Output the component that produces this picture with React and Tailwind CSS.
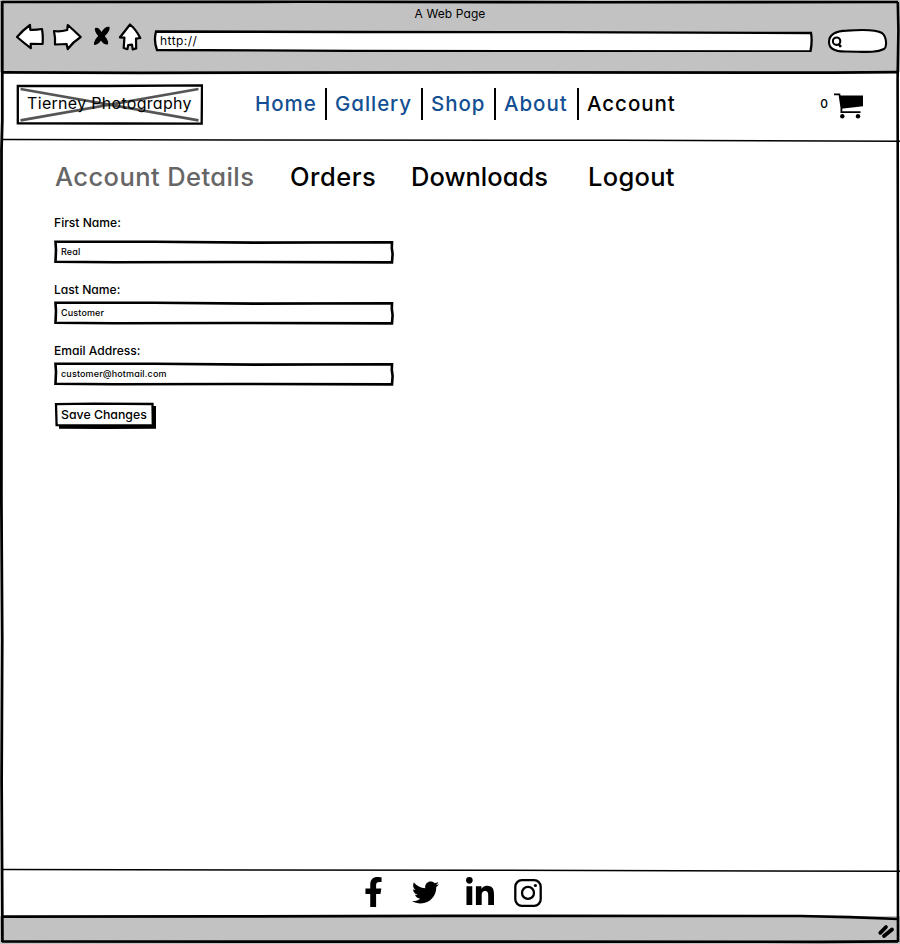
import React from 'react';
import { FaFacebookF, FaTwitter, FaLinkedinIn } from 'react-icons/fa';

function Frame() {
  return (
    <svg className="pointer-events-none absolute inset-0 z-10" width="900" height="944" fill="none" stroke="#000">
      <path d="M2 2 L300 1.8 L600 2.2 L898 2" strokeWidth="2.6" />
      <path d="M2.2 1 L2.3 120 L1.5 150 L1.4 500 L2.2 640 L1.6 780 L2.4 942" strokeWidth="2.8" />
      <path d="M897.8 2 L898.4 30 L897.6 80 L898.3 500 L897.8 700 L898 942" strokeWidth="2.6" />
      <path d="M2 72.3 L140 72.8 L520 72.3 L833 72.6 L898 72.2" strokeWidth="2.8" />
      <path d="M3 139.4 L240 140 L620 140.3 L900 141.2" strokeWidth="1.5" />
      <path d="M3 869.6 L480 870.2 L900 871.3" strokeWidth="1.5" />
      <path d="M2 916.6 L230 916.4 L450 915.8 L800 916 L850 917.2 L898 919" strokeWidth="2.7" />
      <path d="M2 941.5 L430 941.6 L820 941.8 L898 941.4" strokeWidth="2.7" />
    </svg>
  );
}

function BrowserIcons() {
  return (
    <svg width="126" height="28" viewBox="16 23 126 28" fill="#fff" stroke="#000" strokeWidth="2.2" strokeLinejoin="round" className="ml-4 mt-[23px] shrink-0">
      <path d="M17 37 Q23 30 30 25 L30.3 29.8 Q36 30 42 29 Q43.2 36 42.6 44 L30.7 43.8 L30.8 48.2 Q24 43 17 37Z" />
      <path d="M54 31 Q60 32 67.2 30 L67.8 25 Q74 30.5 80.7 37 Q73 42 67.7 49 L66.6 44 L55 44.5 Q55.5 38 54 31Z" />
      <path d="M95 28 Q98.5 26.5 101.5 32 Q105 26 109.5 26.8 Q110.5 31 104.8 36 Q109.5 42 107.8 44.5 Q103.5 45 101 40.5 Q97.5 45.5 94 44.8 Q93.5 40.5 98.2 36 Q94 31 95 28Z" fill="#000" stroke="none" />
      <path d="M130 24.5 Q125 31 120 37.3 L124.4 37.6 L123.7 48 L127.4 49.2 L128.2 45 L132 44.7 L132.7 49.4 L136.2 48.4 L136 38.6 L140.3 38 Q136 29.5 130 24.5Z" />
    </svg>
  );
}

function SketchField({ label, value, gap }) {
  return (
    <label className="block">
      <span className="block h-[18px] text-[12.1px] leading-[18px]">{label}</span>
      <span className={`relative flex h-6 w-[340px] items-center ${gap}`}>
        <svg className="absolute inset-0" width="340" height="24" fill="#fff" stroke="#000">
          <path d="M1.5 1.8 L100 1.7 L200 2.6 L338 2.2 L337.8 8 L338.6 14 L338 22.4 L180 22 L60 22.2 L1.5 21.8 L2 10Z" strokeWidth="2.6" />
        </svg>
        <span className="relative pl-[7px] text-[9px] leading-3 tracking-[0.14px]">{value}</span>
      </span>
    </label>
  );
}

const links = [
  ['Home', 'w-[70px]'],
  ['Gallery', 'w-[86px]'],
  ['Shop', 'w-[63px]'],
  ['About', 'w-[73px]'],
];

export default function App() {
  return (
    <div className="relative flex h-[944px] w-[900px] flex-col overflow-hidden bg-white font-['Inter','Lato',sans-serif] font-medium text-black [font-feature-settings:'cv11']">
      <Frame />
      <header className="relative flex h-[72px] shrink-0 bg-[#c2c2c2]">
        <div className="absolute inset-x-0 top-[5px] text-center text-[12px] leading-[18px] font-normal tracking-[0.1px]">A Web Page</div>
        <BrowserIcons />
        <div className="relative ml-[11px] mt-[30px] flex h-[22px] w-[661px] items-center">
          <svg className="absolute inset-0" width="661" height="22" fill="#fff" stroke="#000">
            <path d="M3 1.5 L200 2 L400 2.2 L658 3 Q659.5 11 657.5 21.3 L400 21.2 L200 20.8 L4 20 Q.5 11 3 1.5Z" strokeWidth="2.3" />
          </svg>
          <span className="relative pl-[7px] text-[12px] leading-4 font-normal tracking-[0.45px]">http://</span>
        </div>
        <svg className="ml-[13px] mt-[28px]" width="62" height="26" viewBox="827 28 62 26" fill="#fff" stroke="#000" strokeWidth="2.1">
          <path d="M829 42 C829 35 835 31 847 30.6 C862 29.5 877 30 882 33 C887 37 887 47 884 49 C875 53.5 862 51.5 845 51.5 C834 51.5 829 48 829 42Z" />
          <circle cx="836.6" cy="41.2" r="3.7" />
          <path d="M838.5 44 L841 47" strokeWidth="2.6" />
        </svg>
      </header>

      <nav className="flex h-[68px] shrink-0 items-start text-[20.5px] leading-7 tracking-[0.95px]">
        <div className="relative ml-4 mt-3 flex h-[41px] w-[187px] items-center justify-center">
          <svg className="absolute inset-0" width="187" height="41" fill="none" stroke="#000">
            <path d="M1.8 1.8 L90 2 L186 1.3 L185.7 39.6 L100 39.5 L1.8 39.3Z" strokeWidth="2.3" />
            <path d="M4.5 5 L182.5 36.3 M4.5 36.3 L182.5 5" stroke="#555" strokeWidth="2.7" />
          </svg>
          <span className="relative -top-0.5 text-[16px] leading-6 font-normal tracking-[0.3px] whitespace-nowrap">Tierney Photography</span>
        </div>
        <div className="ml-[52px] mt-4 flex h-8 items-center text-[#134f93]">
          {links.map(([name, width]) => (
            <React.Fragment key={name}>
              <span className={`${width} -mt-px`}>{name}</span>
              <span className="mr-[8px] h-8 w-[2px] bg-black" />
            </React.Fragment>
          ))}
          <span className="-mt-px w-[90px] text-black">Account</span>
        </div>
        <div className="ml-auto mr-9 mt-5 flex tracking-normal">
          <span className="mr-[5px] mt-[3px] text-[12px] leading-[18px]">0</span>
          <svg width="31" height="28" viewBox="833 92 31 28">
            <path d="M834 94.3 H839.4 L841.4 107.5 V112.2 H860.5" fill="none" stroke="#000" strokeWidth="1.8" />
            <path d="M839.6 95.5 H863 V106.2 L841.2 108.8Z" />
            <circle cx="842.3" cy="116.2" r="2.2" />
            <circle cx="858" cy="116.2" r="2.2" />
          </svg>
        </div>
      </nav>

      <main className="flex grow flex-col pl-[54px]">
        <div className="flex h-[72px] pt-5 text-[25.5px] leading-[34px]">
          <span className="w-[235px] pl-px tracking-[0.42px] text-[#666]">Account Details</span>
          <span className="w-[122px] pl-px tracking-[0.5px]">Orders</span>
          <span className="w-[176px]">Downloads</span>
          <span className="pl-px tracking-[0.3px]">Logout</span>
        </div>
        <div className="flex flex-col pt-[2px]">
          <SketchField label="First Name:" value="Real" gap="mt-2" />
          <div className="mt-[17px]">
            <SketchField label="Last Name:" value="Customer" gap="mt-[2px]" />
          </div>
          <div className="mt-[17px]">
            <SketchField label="Email Address:" value="customer@hotmail.com" gap="mt-[2px]" />
          </div>
        </div>
        <button className="relative mt-4 flex h-7 w-[104px] items-center text-left">
          <svg className="absolute inset-0" width="104" height="28" fill="#fff" stroke="#000">
            <path d="M5 25.3 L50 25.6 L100.5 25.2 L100.5 4" strokeWidth="3" fill="none" />
            <path d="M2 2.2 L40 1.6 L98.5 2 L98.8 23.2 L50 23.3 L2.6 23.2Z" strokeWidth="2.3" />
          </svg>
          <span className="relative -top-px pl-[7px] text-[12.3px] leading-[18px] whitespace-nowrap">Save Changes</span>
        </button>
      </main>

      <footer className="flex h-[46px] shrink-0 items-start pl-[364px]">
        <FaFacebookF className="mt-[7px] h-[30px] w-[19px]" />
        <FaTwitter className="ml-[29px] mt-[9px] h-[27px] w-[27px]" />
        <FaLinkedinIn className="ml-[27px] mt-[7px] h-8 w-7" />
        <svg className="ml-5 mt-[9px]" width="28" height="28" viewBox="0 0 28 28" fill="none" stroke="#000" strokeWidth="2.3">
          <rect x="1.3" y="1.2" width="25.4" height="25.6" rx="6.5" />
          <circle cx="14" cy="13.9" r="6" />
          <circle cx="21.4" cy="6.5" r="1.6" fill="#000" stroke="none" />
        </svg>
      </footer>
      <div className="flex h-[28px] shrink-0 justify-end bg-[#c2c2c2]">
        <svg width="24" height="24" viewBox="876 916 24 24" stroke="#000" strokeWidth="3.8" strokeLinecap="round">
          <path d="M880.3 932.8 L886 927 M884 936 L892 929.5" />
        </svg>
      </div>
    </div>
  );
}
